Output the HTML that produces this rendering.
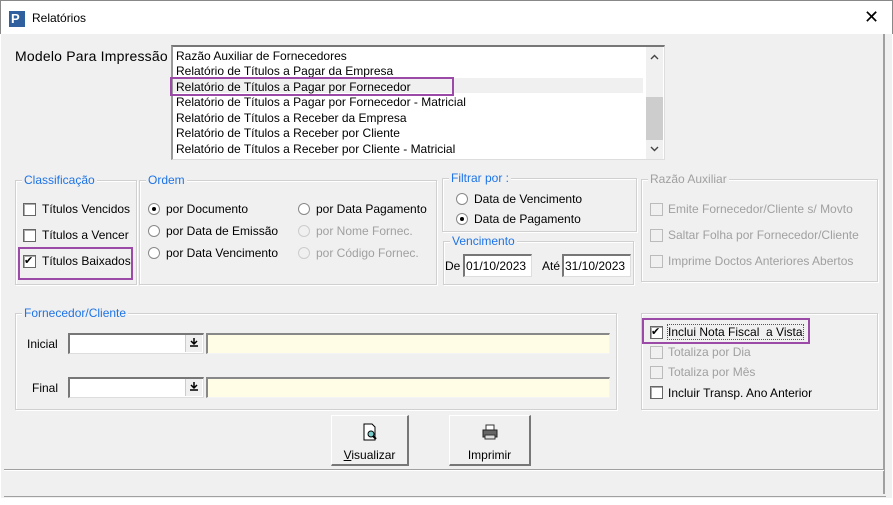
<!DOCTYPE html>
<html><head><meta charset="utf-8"><style>
*{box-sizing:border-box;margin:0;padding:0}
body{width:893px;height:505px;background:#fff;font-family:"Liberation Sans",Tahoma,sans-serif;font-size:12px;color:#000;position:relative;overflow:hidden}
.a{position:absolute}
.t{position:absolute;white-space:nowrap;line-height:14px}
.g{position:absolute;border:1px solid #d0d0d0;box-shadow:inset 1px 1px 0 #fff,1px 1px 0 #fff}
.gl{position:absolute;top:-8px;left:6px;background:#f0f0f0;padding:0 2px;color:#1e73e6;line-height:14px;white-space:nowrap}
.dis{color:#a0a0a0}
.cb{position:absolute;width:13px;height:13px;border:1px solid #666;background:#fff;box-shadow:inset 1px 1px 0 #aaa}
.cb.d{border-color:#bbb;background:#f0f0f0;box-shadow:none}
.rb{position:absolute;width:12px;height:12px;border-radius:50%;border:1px solid #888;background:#fff}
.rb.d{border-color:#ccc;background:#f0f0f0}
.rb.on::after{content:"";position:absolute;left:3px;top:3px;width:4px;height:4px;border-radius:50%;background:#000}
.chk::after{content:"✔";position:absolute;left:0;top:-2px;font-size:11px;line-height:14px}
.in{position:absolute;background:#fff;border:1px solid #ddd;border-top:2px solid #777;border-left:2px solid #777}
.pur{position:absolute;border:2px solid #9b4aa8}
.btn{position:absolute;background:#f0f0f0;border:1px solid #fff;border-right:2px solid #777;border-bottom:2px solid #777;text-align:center}
.arr{position:absolute;width:17px;height:17px;background:#f0f0f0;border-left:1px solid #ccc}
</style></head><body>
<div class="a" style="left:0;top:0;width:893px;height:34px;background:#fff;border:1px solid #888;border-bottom:none"></div>
<div class="a" style="left:9px;top:11px;width:16px;height:16px;background:#2f5f9c"></div>
<div class="t" style="left:11px;top:12px;color:#fff;font-weight:bold;font-size:13px">P</div>
<div class="t" style="left:32px;top:11px;font-size:12px">Relatórios</div>
<div class="t" style="left:864px;top:8px;font-size:18px;line-height:18px">✕</div>
<div class="a" style="left:1px;top:34px;width:891px;height:471px;background:#f0f0f0"></div>
<div class="a" style="left:883px;top:34px;width:2px;height:460px;background:#a0a0a0"></div>
<div class="a" style="left:4px;top:469px;width:880px;height:2px;border-top:1px solid #a0a0a0;border-bottom:1px solid #fff"></div>
<div class="a" style="left:4px;top:496px;width:882px;height:1px;background:#a0a0a0"></div>
<div class="a" style="left:1px;top:498px;width:891px;height:7px;background:#fff"></div>

<div class="t" style="left:15px;top:49px;font-size:14px;letter-spacing:0.2px">Modelo Para Impressão</div>
<div class="a" style="left:171px;top:45px;width:494px;height:115px;background:#fff;border:1px solid #ddd;border-top:2px solid #777;border-left:2px solid #999"></div>
<div class="a" style="left:173px;top:78px;width:470px;height:15px;background:#f0f0f0"></div>
<div class="a" style="left:646px;top:47px;width:17px;height:112px;background:#f0f0f0"></div>
<div class="a" style="left:646px;top:97px;width:17px;height:43px;background:#cdcdcd"></div>
<svg class="a" style="left:650px;top:54px" width="9" height="6"><path d="M1 5L4.5 1.5L8 5" fill="none" stroke="#444" stroke-width="1.4"/></svg>
<svg class="a" style="left:650px;top:146px" width="9" height="6"><path d="M1 1L4.5 4.5L8 1" fill="none" stroke="#444" stroke-width="1.4"/></svg>
<div class="t" style="left:176px;top:49px">Razão Auxiliar de Fornecedores</div>
<div class="t" style="left:176px;top:64px">Relatório de Títulos a Pagar da Empresa</div>
<div class="t" style="left:176px;top:80px">Relatório de Títulos a Pagar por Fornecedor</div>
<div class="t" style="left:176px;top:95px">Relatório de Títulos a Pagar por Fornecedor - Matricial</div>
<div class="t" style="left:176px;top:111px">Relatório de Títulos a Receber da Empresa</div>
<div class="t" style="left:176px;top:126px">Relatório de Títulos a Receber por Cliente</div>
<div class="t" style="left:176px;top:142px">Relatório de Títulos a Receber por Cliente - Matricial</div>
<div class="pur" style="left:170px;top:77px;width:284px;height:19px"></div>

<div class="g" style="left:15px;top:180px;width:122px;height:105px"><div class="gl">Classificação</div></div>
<div class="cb" style="left:23px;top:203px"></div><div class="t" style="left:42px;top:202px">Títulos Vencidos</div>
<div class="cb" style="left:23px;top:229px"></div><div class="t" style="left:42px;top:228px">Títulos a Vencer</div>
<div class="cb chk" style="left:23px;top:255px"></div><div class="t" style="left:42px;top:254px">Títulos Baixados</div>
<div class="pur" style="left:18px;top:247px;width:115px;height:33px"></div>

<div class="g" style="left:139px;top:180px;width:298px;height:105px"><div class="gl">Ordem</div></div>
<div class="rb on" style="left:148px;top:203px"></div><div class="t" style="left:166px;top:202px">por Documento</div>
<div class="rb" style="left:148px;top:225px"></div><div class="t" style="left:166px;top:224px">por Data de Emissão</div>
<div class="rb" style="left:148px;top:247px"></div><div class="t" style="left:166px;top:246px">por Data Vencimento</div>
<div class="rb" style="left:298px;top:203px"></div><div class="t" style="left:316px;top:202px">por Data Pagamento</div>
<div class="rb d" style="left:298px;top:225px"></div><div class="t dis" style="left:316px;top:224px">por Nome Fornec.</div>
<div class="rb d" style="left:298px;top:247px"></div><div class="t dis" style="left:316px;top:246px">por Código Fornec.</div>

<div class="g" style="left:442px;top:178px;width:195px;height:54px"><div class="gl">Filtrar por :</div></div>
<div class="rb" style="left:456px;top:193px"></div><div class="t" style="left:474px;top:192px">Data de Vencimento</div>
<div class="rb on" style="left:456px;top:213px"></div><div class="t" style="left:474px;top:212px">Data de Pagamento</div>
<div class="g" style="left:443px;top:241px;width:191px;height:44px"><div class="gl">Vencimento</div></div>
<div class="t" style="left:445px;top:259px">De</div>
<div class="in" style="left:463px;top:254px;width:69px;height:23px"></div>
<div class="t" style="left:466px;top:259px">01/10/2023</div>
<div class="t" style="left:542px;top:259px">Até</div>
<div class="in" style="left:562px;top:254px;width:69px;height:23px"></div>
<div class="t" style="left:565px;top:259px">31/10/2023</div>

<div class="g" style="left:641px;top:179px;width:237px;height:103px"><div class="gl dis">Razão Auxiliar</div></div>
<div class="cb d" style="left:650px;top:203px"></div><div class="t dis" style="left:668px;top:202px">Emite Fornecedor/Cliente s/ Movto</div>
<div class="cb d" style="left:650px;top:229px"></div><div class="t dis" style="left:668px;top:228px">Saltar Folha por Fornecedor/Cliente</div>
<div class="cb d" style="left:650px;top:255px"></div><div class="t dis" style="left:668px;top:254px">Imprime Doctos Anteriores Abertos</div>

<div class="g" style="left:15px;top:313px;width:602px;height:97px"><div class="gl">Fornecedor/Cliente</div></div>
<div class="t" style="left:27px;top:337px">Inicial</div>
<div class="in" style="left:68px;top:333px;width:136px;height:21px"></div>
<div class="arr" style="left:185px;top:335px"><svg width="16" height="16"><path d="M8 3v6M5 6l3 3 3-3M4 11h8" fill="none" stroke="#000" stroke-width="1.5"/></svg></div>
<div class="in" style="left:206px;top:333px;width:404px;height:21px;background:#fffde6;border-color:#f4f4f4 #f4f4f4 #f4f4f4 #888;border-top:2px solid #888"></div>
<div class="t" style="left:32px;top:381px">Final</div>
<div class="in" style="left:68px;top:377px;width:136px;height:21px"></div>
<div class="arr" style="left:185px;top:379px"><svg width="16" height="16"><path d="M8 3v6M5 6l3 3 3-3M4 11h8" fill="none" stroke="#000" stroke-width="1.5"/></svg></div>
<div class="in" style="left:206px;top:377px;width:404px;height:21px;background:#fffde6;border-color:#f4f4f4 #f4f4f4 #f4f4f4 #888;border-top:2px solid #888"></div>

<div class="g" style="left:641px;top:313px;width:237px;height:97px"></div>
<div class="cb chk" style="left:650px;top:326px"></div><div class="t" style="left:668px;top:325px;outline:1px dotted #555">Inclui Nota Fiscal&nbsp; a Vista</div>
<div class="pur" style="left:642px;top:318px;width:168px;height:26px"></div>
<div class="cb d" style="left:650px;top:346px"></div><div class="t dis" style="left:668px;top:345px">Totaliza por Dia</div>
<div class="cb d" style="left:650px;top:366px"></div><div class="t dis" style="left:668px;top:365px">Totaliza por Mês</div>
<div class="cb" style="left:650px;top:386px"></div><div class="t" style="left:668px;top:386px">Incluir Transp. Ano Anterior</div>

<div class="btn" style="left:331px;top:415px;width:78px;height:51px">
<svg width="18" height="18" style="margin-top:7px" viewBox="0 0 18 18"><path d="M3 1h8l3 3v13H3z" fill="#fff" stroke="#000"/><circle cx="10" cy="11" r="3" fill="#7cc" stroke="#000"/><path d="M12 13l3 3" stroke="#000" stroke-width="2"/></svg>
<div style="margin-top:4px"><u>V</u>isualizar</div></div>
<div class="btn" style="left:449px;top:415px;width:82px;height:51px">
<svg width="18" height="18" style="margin-top:7px" viewBox="0 0 18 18"><path d="M5 2h8v5H5z" fill="#fff" stroke="#333"/><path d="M2 7h14v7H2z" fill="#666" stroke="#222"/><path d="M4 12h10v4H4z" fill="#ddd" stroke="#333"/></svg>
<div style="margin-top:4px">Imprimir</div></div>
</body></html>
